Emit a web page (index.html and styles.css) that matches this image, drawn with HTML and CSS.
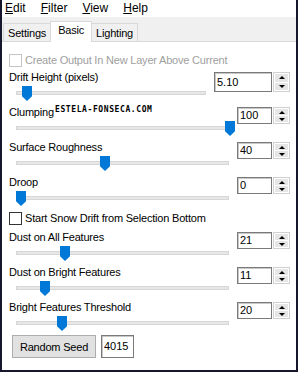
FILE: index.html
```html
<!DOCTYPE html>
<html lang="en">
<head>
    <meta charset="UTF-8">
    <title>Snow Drift</title>
    <link rel="stylesheet" href="styles.css">
</head>
<body>
<div class="window">
    <div class="menubar">
        <span class="menu"><u>E</u>dit</span>
        <span class="menu"><u>F</u>ilter</span>
        <span class="menu"><u>V</u>iew</span>
        <span class="menu"><u>H</u>elp</span>
    </div>

    <div class="tabs">
        <div class="tab">Settings</div>
        <div class="tab active">Basic</div>
        <div class="tab">Lighting</div>
    </div>

    <div class="panel">
        <div class="check disabled"><span class="box"></span>Create Output In New Layer Above Current</div>

        <div class="param tall">
            <div class="label">Drift Height (pixels)</div>
            <div class="slider"><div class="track"></div><div class="thumb" style="left:6px"></div></div>
            <div class="spin">
                <div class="field wide">5.10</div>
                <div class="arrows"><span class="up"></span><span class="down"></span></div>
            </div>
        </div>

        <div class="param">
            <div class="label">Clumping</div>
            <div class="slider"><div class="track"></div><div class="thumb" style="left:209px"></div></div>
            <div class="spin">
                <div class="field">100</div>
                <div class="arrows"><span class="up"></span><span class="down"></span></div>
            </div>
            <span class="watermark">ESTELA-FONSECA.COM</span>
        </div>

        <div class="param">
            <div class="label">Surface Roughness</div>
            <div class="slider"><div class="track"></div><div class="thumb" style="left:84px"></div></div>
            <div class="spin">
                <div class="field">40</div>
                <div class="arrows"><span class="up"></span><span class="down"></span></div>
            </div>
        </div>

        <div class="param">
            <div class="label">Droop</div>
            <div class="slider"><div class="track"></div><div class="thumb" style="left:0px"></div></div>
            <div class="spin">
                <div class="field">0</div>
                <div class="arrows"><span class="up"></span><span class="down"></span></div>
            </div>
        </div>

        <div class="check second"><span class="box"></span>Start Snow Drift from Selection Bottom</div>

        <div class="param">
            <div class="label">Dust on All Features</div>
            <div class="slider"><div class="track"></div><div class="thumb" style="left:44px"></div></div>
            <div class="spin">
                <div class="field">21</div>
                <div class="arrows"><span class="up"></span><span class="down"></span></div>
            </div>
        </div>

        <div class="param">
            <div class="label">Dust on Bright Features</div>
            <div class="slider"><div class="track"></div><div class="thumb" style="left:24px"></div></div>
            <div class="spin">
                <div class="field">11</div>
                <div class="arrows"><span class="up"></span><span class="down"></span></div>
            </div>
        </div>

        <div class="param">
            <div class="label">Bright Features Threshold</div>
            <div class="slider"><div class="track"></div><div class="thumb" style="left:41px"></div></div>
            <div class="spin">
                <div class="field">20</div>
                <div class="arrows"><span class="up"></span><span class="down"></span></div>
            </div>
        </div>

        <div class="seed">
            <button type="button">Random Seed</button>
            <div class="seed-value">4015</div>
        </div>
    </div>
</div>
</body>
</html>
```

FILE: styles.css
```css
body {
    margin: 0;
    font-family: "Liberation Sans", Arial, sans-serif;
    font-size: 11px;
    color: #000;
    background: #fff;
}

.window {
    width: 298px;
    height: 372px;
    box-sizing: border-box;
    border: 2px solid #16162c;
    border-top: none;
    background: #fff;
    overflow: hidden;
}

/* menu */
.menubar {
    display: flex;
    gap: 15px;
    height: 17px;
    padding-left: 3px;
    font-size: 12px;
    line-height: 17px;
}

/* tabs */
.tabs {
    display: flex;
    align-items: flex-end;
    height: 24px;
    padding-left: 1px;
    background: #f0f0f0;
    border-bottom: 1px solid #d9d9d9;
}

.tab {
    height: 17px;
    line-height: 18px;
    padding: 0 4px;
    border: 1px solid #d9d9d9;
    border-bottom: none;
    background: #f0f0f0;
    letter-spacing: -0.2px;
}

.tab.active {
    position: relative;
    height: 20px;
    line-height: 17px;
    margin: 0 -1px -1px -1px;
    padding: 0 7px;
    background: #fff;
    z-index: 1;
}

/* panel */
.panel {
    padding: 10px 6px 0 7px;
}

.check {
    display: flex;
    align-items: center;
    gap: 3px;
    height: 16px;
    margin-bottom: 2px;
    letter-spacing: -0.2px;
}

.check .box {
    width: 11px;
    height: 11px;
    border: 1px solid #333;
    background: #fff;
}

.check.disabled {
    color: #a0a0a0;
}

.check.disabled .box {
    border-color: #c4c4c4;
}

.check.second {
    margin-top: 4px;
    margin-bottom: 4px;
}

.param {
    position: relative;
    display: grid;
    grid-template-columns: 1fr auto;
    grid-template-rows: 14px 17px;
    column-gap: 8px;
    margin-bottom: 4px;
}

.label {
    grid-column: 1 / 3;
    grid-row: 1;
    line-height: 14px;
    letter-spacing: -0.2px;
}

.slider {
    grid-column: 1;
    grid-row: 2;
    position: relative;
    margin-left: 7px;
}

.track {
    margin-top: 7px;
    height: 2px;
    border: 1px solid #d6d6d6;
    background: #e7e7e7;
}

.thumb {
    position: absolute;
    top: 2px;
    width: 10px;
    height: 15px;
    background: #0078d7;
    clip-path: polygon(0 0, 100% 0, 100% 68%, 50% 100%, 0 68%);
}

.spin {
    grid-column: 2;
    grid-row: 1 / 3;
    align-self: start;
    display: flex;
    gap: 1px;
    margin-top: 2px;
}

.field {
    width: 31px;
    height: 15px;
    line-height: 15px;
    padding-left: 2px;
    border: 1px solid #7a7a7a;
    box-shadow: inset 1px 1px 0 #c8c8c8;
    background: #fff;
}

.field.wide {
    width: 54px;
    height: 18px;
    line-height: 18px;
}

.arrows {
    display: flex;
    flex-direction: column;
    gap: 1px;
    width: 13px;
    padding: 1px;
    border: 1px solid #d0d0d0;
    background: #fff;
}

.arrows span {
    flex: 1;
    display: flex;
    align-items: center;
    justify-content: center;
    background: #e6e6e6;
}

.arrows .up::after {
    content: "";
    border-left: 3px solid transparent;
    border-right: 3px solid transparent;
    border-bottom: 3px solid #000;
}

.arrows .down::after {
    content: "";
    border-left: 3px solid transparent;
    border-right: 3px solid transparent;
    border-top: 3px solid #000;
}

.watermark {
    position: absolute;
    left: 46px;
    top: 0;
    font-family: "DejaVu Sans Mono", monospace;
    font-size: 8px;
    font-weight: bold;
    letter-spacing: 0.6px;
    line-height: 10px;
}

/* seed row */
.seed {
    display: flex;
    gap: 5px;
    margin-top: 3px;
    padding-left: 3px;
}

.seed button {
    width: 84px;
    height: 23px;
    font-family: inherit;
    font-size: 11px;
    letter-spacing: -0.2px;
    background: #e1e1e1;
    border: 1px solid #adadad;
    padding: 0;
}

.seed-value {
    width: 29px;
    height: 21px;
    line-height: 21px;
    padding-left: 2px;
    border: 1px solid #7a7a7a;
    box-shadow: inset 1px 1px 0 #c8c8c8;
}
```
